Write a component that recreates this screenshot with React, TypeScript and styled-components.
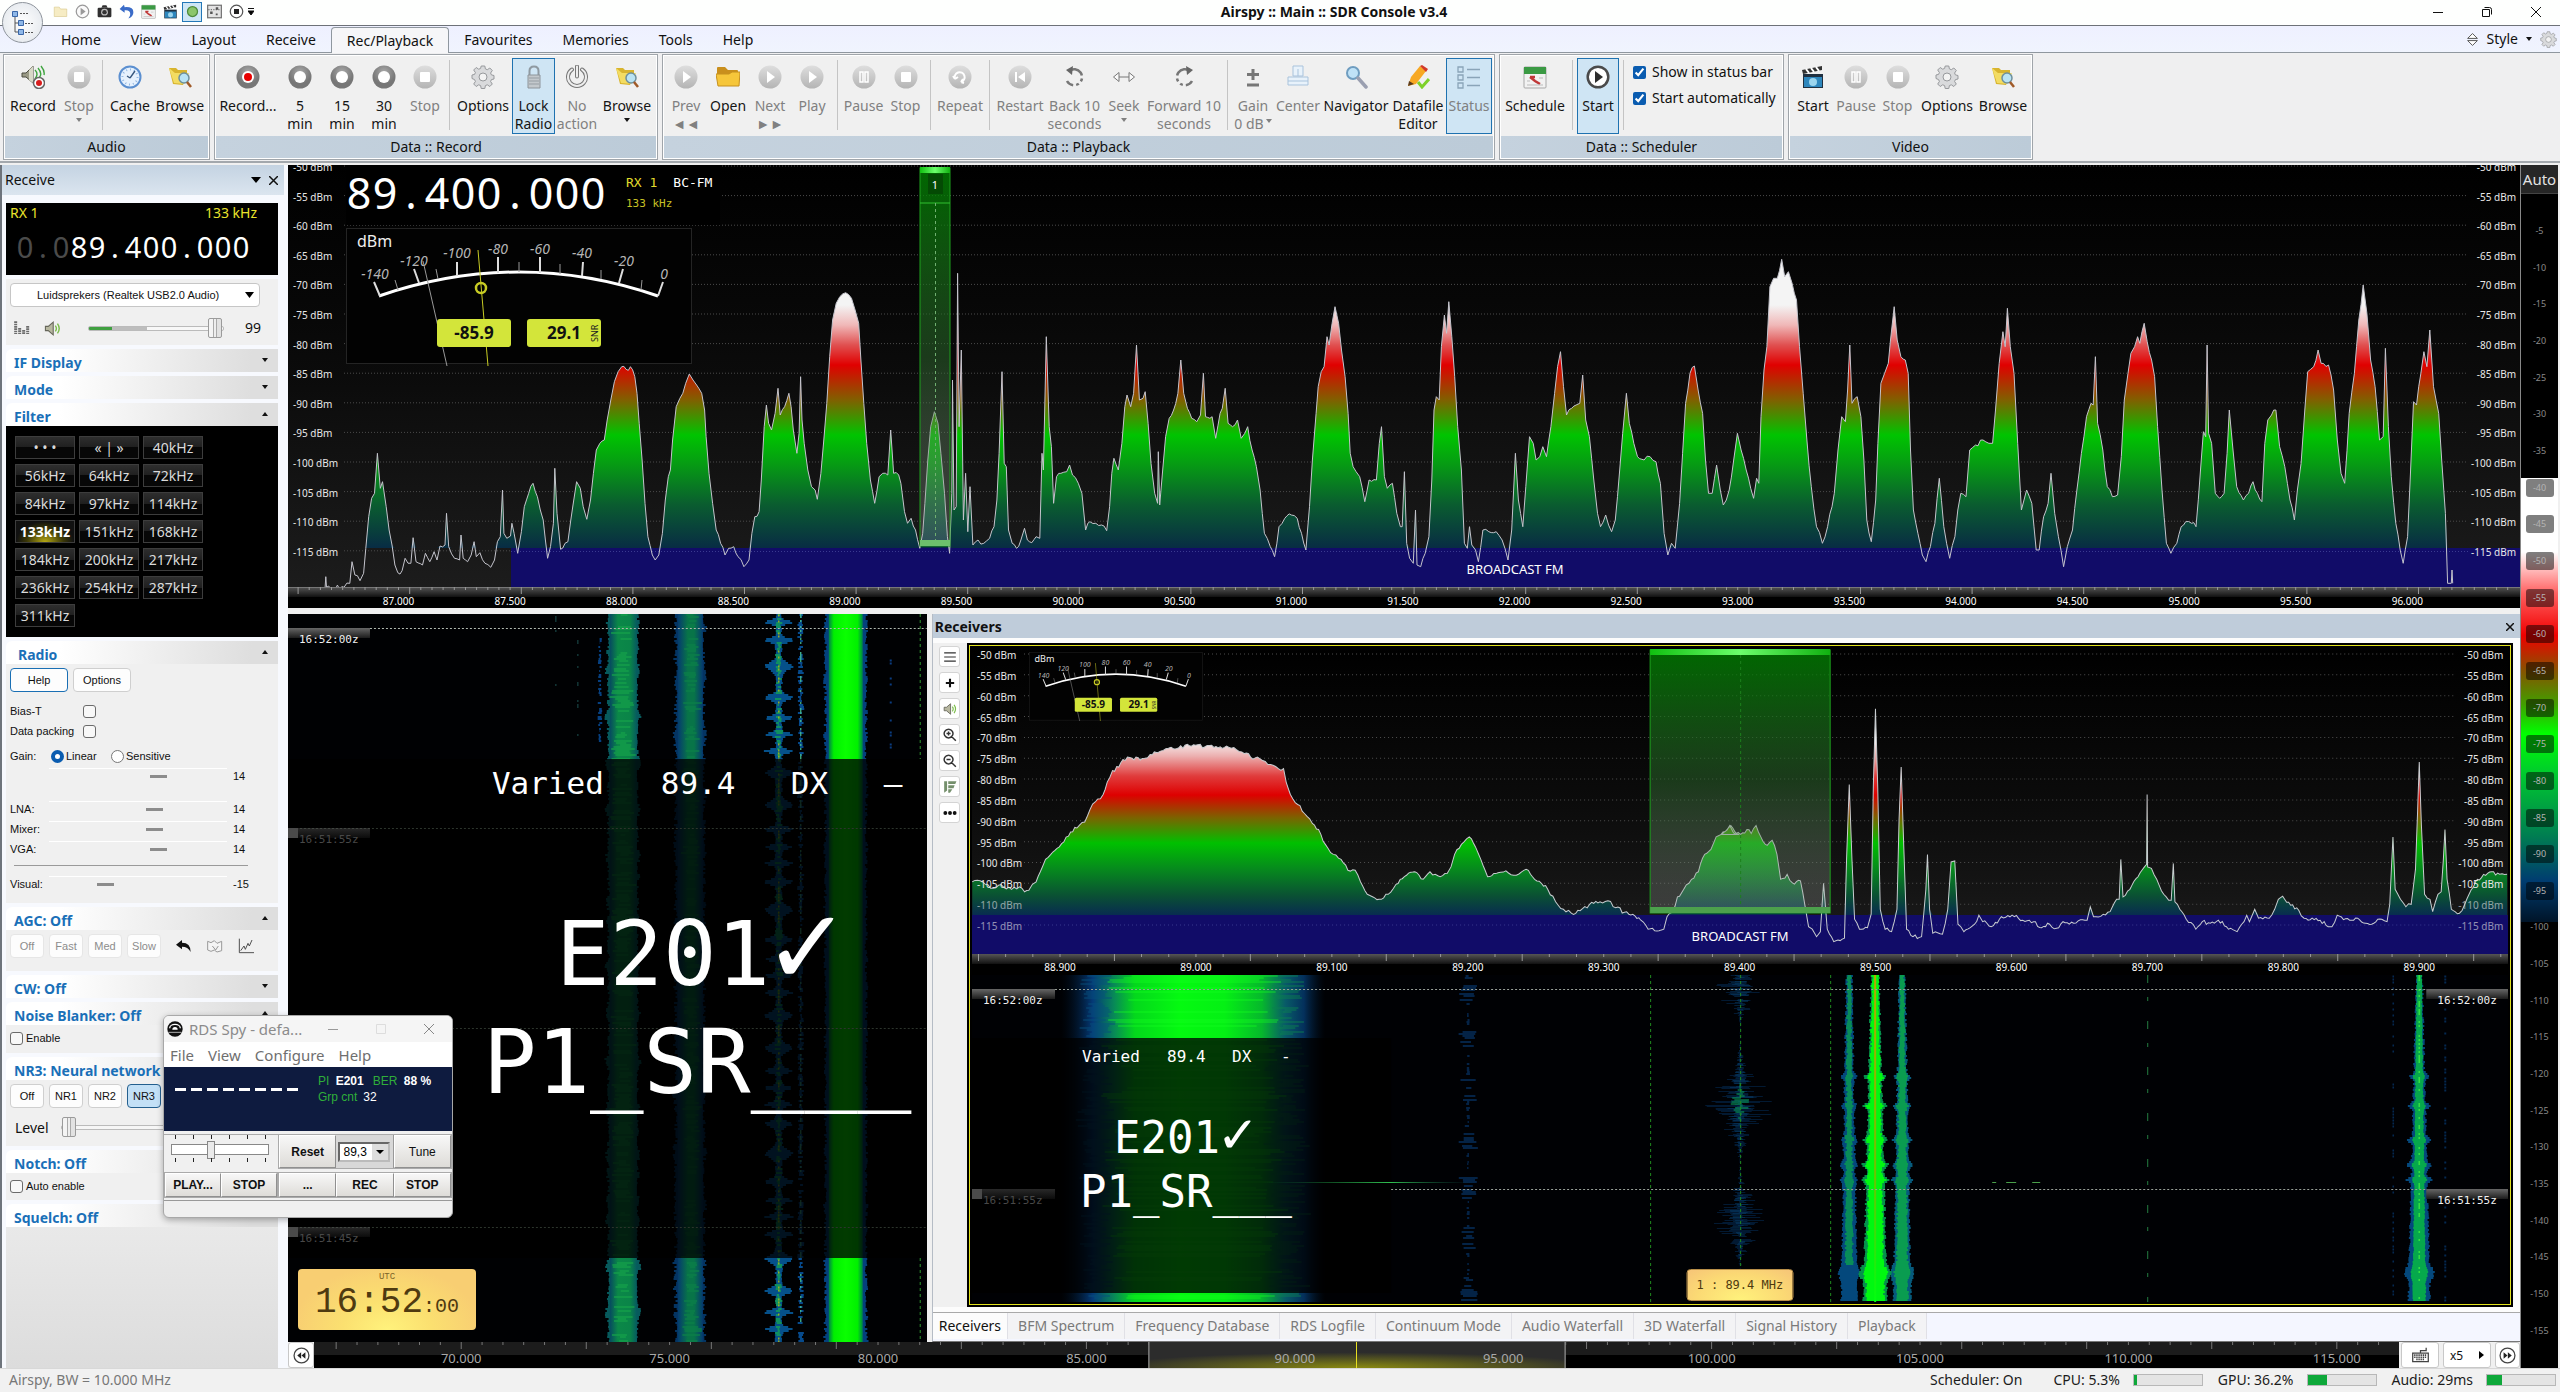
import React from "react";
import styled, { createGlobalStyle, css } from "styled-components";

/* ------------------------------------------------------------------ */
/* Tokens                                                              */
/* ------------------------------------------------------------------ */

const UI = `"Noto Sans", "Open Sans", sans-serif`;
const SMALL = `"Liberation Sans", Arial, sans-serif`;
const MONO = `"DejaVu Sans Mono", "Liberation Mono", monospace`;

const Global = createGlobalStyle`
  *, *::before, *::after { box-sizing: border-box; }
  html, body, #root { height: 100%; }
  body { margin: 0; background: #f0f0f0; font-family: ${UI}; font-size: 14px; color: #111; overflow: hidden; }
  button, select, input { font-family: inherit; }
  button { margin: 0; padding: 0; border: 0; background: none; color: inherit; }
`;

/* ------------------------------------------------------------------ */
/* Helpers for the plots                                               */
/* ------------------------------------------------------------------ */

type Pt = [number, number];

function random(seed: number) {
  let s = seed;
  return () => {
    s = (s * 1664525 + 1013904223) % 4294967296;
    return s / 4294967296;
  };
}

function samples(raw: string, sx: number, ox: number, sy: number, oy: number): Pt[] {
  return raw.trim().split(/\s+/).map((p) => {
    const [x, y] = p.split(",").map(Number);
    return [x / sx + ox, y / sy + oy] as Pt;
  });
}

/* Adds receiver noise between the samples of a trace. */
function roughen(points: Pt[], amp: number, seed: number): Pt[] {
  const rnd = random(seed);
  const out: Pt[] = [];
  points.forEach((p, i) => {
    out.push(p);
    const n = points[i + 1];
    if (!n) return;
    const steps = Math.floor((n[0] - p[0]) / 2);
    for (let k = 1; k < steps; k++) {
      const t = k / steps;
      out.push([p[0] + (n[0] - p[0]) * t, p[1] + (n[1] - p[1]) * t + (rnd() - 0.5) * amp]);
    }
  });
  return out;
}

const toLine = (pts: Pt[]) => pts.map((p, i) => `${i ? "L" : "M"}${p[0].toFixed(1)} ${p[1].toFixed(1)}`).join("");

function toArea(pts: Pt[], floor: number) {
  const c = pts.map((p) => [p[0], Math.min(p[1], floor)] as Pt);
  return `${toLine(c)}L${c[c.length - 1][0]} ${floor}L${c[0][0]} ${floor}Z`;
}

/* Horizontal strokes of varying width: one waterfall line for each step. */
function rows(cx: number, half: (y: number, r: number) => number, y0: number, y1: number, seed: number, step = 2, fill = 1) {
  const rnd = random(seed);
  let d = "";
  for (let y = y0 + step / 2; y < y1; y += step) {
    if (rnd() > fill) continue;
    const l = half(y, rnd());
    const r = half(y, rnd());
    d += `M${(cx - l).toFixed(1)} ${y}H${(cx + r).toFixed(1)}`;
  }
  return d;
}

/* ------------------------------------------------------------------ */
/* Trace data                                                          */
/* ------------------------------------------------------------------ */

const WIDE_LOW = `62,1282 63,1250 64,1282 88,1282 96,1270 99,1205 103,1245 110,1262 115,1240 118,1165 122,1070 126,1015 130,1000 134,880 138,985 141,965 146,1040 150,1110 154,1155 158,1215 162,1238 168,1232 172,1195 180,1210 183,1133 187,1205 196,1215 200,1180 206,1205 212,1175 216,1200 220,1158 227,1155 229,1060 232,1160 240,1195 247,1200 249,1125 252,1195 258,1205 263,1185 267,1145 270,1190 275,1178 282,1210 290,1222 295,1200 299,1145 303,1130 306,990 308,1120 312,1135 317,1128 319,1090 322,1120 327,1180 332,1115 336,1040 342,1000 348,970 354,1010 358,1050 362,1080 365,1140 368,1195 372,1160 376,1090 378,925 381,1060 386,1168 392,1150 396,1145 400,1080 403,1035 408,965 413,985 417,1040 422,1078 427,1020 431,940 435,870 440,850 446,840 450,780 455,720 460,665 465,635 470,620 476,628 482,620 488,650 491,700 494,790 498,900 502,1030 506,1130 512,1185 516,1200 521,1185 526,1120 530,1020 534,950 537,930 540,840 545,740 550,715 554,700 558,670 563,642 568,660 573,675 580,700 584,750 586,830 590,940 595,1030 600,1110 606,1150 612,1185 617,1165 624,1160 630,1190 638,1220 645,1200 649,1120 653,1070 659,1055 662,960 666,800 669,735 672,790 676,810 681,760 685,685 688,765 694,740 700,700 703,740 706,810 711,880 714,820 716,650 718,780 721,850 726,930 731,980 736,990 739,1018 744,940 748,840 752,730 756,590 760,480 765,430 770,410 778,398 786,415 791,450 796,490 799,600 803,730 807,850 812,960 818,1030 824,950 829,940 836,945 840,810 844,940 851,945 854,970 859,1055 863,1090 868,1075 874,1110 880,1165 884,1120 887,1030 891,900 895,800 900,755 905,790 909,880 914,1000 918,1130 921,1180 924,1000 925,660 927,1050 930,1040 932,340 934,800 937,570 940,1080 943,940 946,1115 949,980 953,1155 960,1140 968,1150 976,1135 982,1100 986,1020 989,880 993,635 996,910 999,920 1002,1110 1007,1150 1013,1165 1019,1140 1024,1105 1028,1140 1034,1148 1040,1130 1045,1135 1048,880 1050,930 1054,530 1058,800 1061,860 1064,1030 1068,950 1074,940 1082,935 1086,915 1090,945 1098,970 1103,1000 1108,1110 1114,1085 1122,1090 1130,1095 1137,1112 1141,1040 1144,940 1147,895 1153,930 1158,850 1162,740 1165,705 1170,740 1174,700 1178,555 1182,720 1187,715 1190,695 1194,790 1198,910 1203,1000 1207,1030 1208,875 1210,1035 1214,930 1218,830 1223,775 1229,750 1235,700 1239,600 1243,700 1248,745 1254,775 1261,785 1266,765 1270,640 1273,770 1282,770 1287,835 1293,760 1296,745 1300,685 1304,790 1310,800 1317,780 1322,835 1327,820 1331,800 1337,870 1343,920 1348,990 1354,1120 1362,1160 1368,1190 1374,1100 1382,1075 1391,1065 1399,1075 1405,1120 1411,1170 1416,1040 1420,900 1425,760 1428,680 1432,635 1436,620 1440,530 1443,555 1447,490 1451,440 1456,490 1460,570 1465,650 1469,760 1472,880 1476,920 1480,935 1485,950 1492,1025 1498,960 1508,960 1512,850 1515,800 1519,950 1523,985 1530,970 1536,1060 1541,1100`;
const WIDE_HIGH = `3,1100 6,935 9,1150 13,1195 18,1210 21,1050 23,1215 28,1220 34,1180 39,1130 43,960 46,750 49,710 53,720 56,560 60,465 63,520 66,425 70,530 74,650 78,800 83,930 87,1150 91,1165 94,1100 97,1155 102,1170 106,1205 112,1110 120,1115 130,1115 138,1140 146,1200 151,1110 156,880 160,1020 166,1100 170,980 175,830 180,850 184,900 189,890 193,860 198,890 204,800 209,700 213,620 217,575 221,680 225,765 232,745 238,735 243,730 247,645 251,780 256,830 262,960 267,1060 271,1100 278,1065 286,1115 291,1080 297,930 301,820 306,700 310,790 316,850 321,890 330,900 338,890 346,905 352,970 357,1120 362,1185 367,1150 372,1165 378,1030 382,880 386,730 392,640 398,618 403,690 409,760 413,900 417,1000 422,1000 428,915 433,990 437,1035 445,990 451,900 456,820 461,870 468,930 474,985 478,1015 482,955 485,970 488,770 492,630 496,560 500,380 505,355 510,355 516,298 520,350 525,335 530,370 536,420 540,560 545,700 550,840 556,980 563,1100 571,1150 578,1100 587,1000 592,870 597,770 602,785 605,690 608,555 611,730 618,710 623,770 627,900 631,1080 637,1145 643,1020 646,850 650,670 655,640 660,610 663,540 668,440 672,540 677,590 683,600 687,640 690,870 694,1050 700,1120 706,1185 711,1205 717,1160 723,1090 729,955 735,1100 743,1195 750,1130 754,1050 758,1000 765,1010 770,870 778,855 788,840 796,850 801,850 805,750 810,610 815,515 818,560 821,445 825,560 830,640 835,850 840,1050 847,990 854,1030 860,1170 864,1170 870,1070 876,1030 880,940 885,1060 890,1130 897,1220 902,1160 909,1110 915,990 921,880 928,770 934,730 937,735 940,590 943,790 950,870 956,980 963,1010 970,1005 975,890 979,720 984,640 988,580 993,560 997,530 1000,550 1006,490 1010,545 1016,600 1020,650 1024,800 1030,990 1036,1150 1042,1180 1050,1150 1056,1100 1062,1085 1070,1090 1076,1100 1082,930 1086,815 1089,830 1091,555 1093,820 1097,850 1102,1000 1108,1015 1114,1000 1118,880 1121,750 1126,870 1131,980 1140,1020 1147,1000 1153,965 1159,1000 1165,1025 1169,850 1173,780 1178,765 1184,750 1189,860 1196,920 1203,1020 1209,1080 1213,990 1218,910 1223,750 1227,635 1235,620 1241,570 1245,610 1255,615 1262,690 1267,840 1272,940 1277,970 1283,760 1290,640 1296,480 1302,375 1307,460 1312,600 1318,680 1324,840 1329,830 1332,565 1336,800 1340,950 1346,1090 1352,1170 1356,1210 1362,1130 1366,930 1370,725 1374,735 1380,640 1384,575 1388,620 1392,510 1397,680 1404,760 1408,900 1413,1060 1416,1270 1421,1270 1422,1230 1423,1270`;
const ZOOM_LOW = `100,545 115,543 125,550 135,558 150,552 160,556 175,560 190,555 200,565 208,562 215,550 222,545 230,525 240,500 250,490 262,478 275,465 288,445 300,437 315,425 325,400 335,385 350,370 358,345 368,322 380,315 388,300 405,297 425,298 440,290 460,283 475,277 490,278 515,272 531,270 545,274 570,276 590,275 605,280 620,288 640,297 655,302 670,310 685,318 695,318 700,345 708,370 722,390 735,408 750,428 762,440 775,470 790,490 805,500 818,522 832,522 842,545 855,570 865,575 882,580 895,570 910,550 930,532 950,527 962,540 975,525 990,533 1008,528 1015,515 1022,490 1035,470 1050,455 1062,475 1072,500 1085,535 1105,527 1120,523 1135,532 1150,525 1163,522 1175,540 1188,548 1200,560 1215,585 1230,600 1245,608 1262,603 1280,590 1300,585 1315,583 1330,597 1355,610 1378,622 1392,640 1413,643 1422,640 1428,615 1440,605 1448,575 1460,560 1475,540 1488,525 1500,490 1512,480 1522,455 1535,445 1550,432 1558,445 1566,450`;
const ZOOM_HIGH = `3,450 8,445 18,432 25,447 38,450 50,440 58,448 67,432 76,455 88,472 97,462 106,490 113,540 125,530 135,547 150,543 158,590 165,635 172,640 180,655 187,645 193,548 200,640 212,665 232,658 236,500 241,350 246,500 251,620 260,640 275,637 282,610 286,350 290,198 294,350 299,600 308,640 320,645 330,600 334,420 338,315 343,480 348,640 360,655 376,655 384,560 387,490 391,600 397,648 415,650 425,600 431,505 438,503 444,630 455,645 475,630 483,612 490,625 510,633 525,615 545,612 565,622 585,625 600,637 615,630 628,638 640,625 660,628 685,622 691,595 697,615 715,610 728,605 740,580 745,580 748,500 752,575 765,560 780,535 792,515 796,510 797,370 798,515 805,518 815,540 828,570 842,582 846,508 849,585 858,600 870,620 888,640 900,625 915,628 930,622 945,635 965,645 978,625 983,612 988,625 998,600 1005,618 1025,618 1035,600 1042,580 1050,574 1065,592 1080,602 1090,618 1105,618 1120,622 1135,635 1142,635 1152,612 1175,622 1190,618 1205,628 1220,628 1235,620 1245,625 1250,590 1253,520 1256,455 1260,560 1270,580 1280,595 1290,590 1298,520 1302,400 1305,305 1309,430 1315,570 1325,580 1330,605 1340,570 1346,565 1350,500 1353,440 1357,540 1365,600 1380,608 1390,590 1398,570 1410,545 1425,530 1440,525 1455,530 1469,530`;

const wideTrace = roughen([...samples(WIDE_LOW, 1.3754, -8, 3, -5), ...samples(WIDE_HIGH, 1.3517, 1112, 3, -5)], 5, 7);
const zoomTrace = roughen([...samples(ZOOM_LOW, 1.912, -52, 2.005, -38), ...samples(ZOOM_HIGH, 1.867, 748, 2.005, -38)], 4, 11);

const LEVELS = [-50, -55, -60, -65, -70, -75, -80, -85, -90, -95, -100, -105, -110, -115];

/* ------------------------------------------------------------------ */
/* Icons                                                               */
/* ------------------------------------------------------------------ */

const Disc = ({ children, light }: { children?: React.ReactNode; light?: boolean }) => (
  <g>
    <circle cx="12" cy="12" r="11.5" fill={light ? "url(#discLight)" : "url(#discDark)"} />
    {children}
  </g>
);

const GEAR = "M10.2 1h3.6l.6 2.9 1.9.8 2.5-1.7 2.5 2.5-1.7 2.5.8 1.9 2.6.6v3.5l-2.6.6-.8 1.9 1.7 2.5-2.5 2.5-2.5-1.7-1.9.8-.6 2.9h-3.6l-.6-2.9-1.9-.8-2.5 1.7-2.5-2.5 1.7-2.5-.8-1.9L1 13.5V10l2.6-.6.8-1.9L2.700 5l2.500-2.500 2.500 1.700 1.900-.8z";

const drawings: Record<string, React.ReactNode> = {
  speakerRec: (
    <g>
      <path d="M1 8h4l7-7v17l-7-6H1z" fill="#9a9a86" stroke="#4c4c40" />
      <path d="M8 5l4-4v17l-4-3z" fill="#d9d9c8" />
      <path d="M14 5q4 4 0 9M17 3q5 6 1 10M20 1q4 5 3 9" fill="none" stroke="#3fa43f" strokeWidth="1.4" />
      <circle cx="18" cy="18" r="5.500" fill="#fff" stroke="#666" strokeWidth="1.500" />
      <circle cx="18" cy="18" r="3" fill="#d81c1c" />
    </g>
  ),
  stop: <Disc light><rect x="7" y="7" width="10" height="10" rx="1" fill="#fff" /></Disc>,
  play: <Disc light><path d="M9 6l8 6-8 6z" fill="#fff" /></Disc>,
  pause: <Disc light><path d="M8 7h3v10H8zM13 7h3v10h-3z" fill="none" stroke="#fff" strokeWidth="1.500" /></Disc>,
  repeat: <Disc light><path d="M7 14a5 5 0 1 1 6 3M7 14l-2-3M7 14l3-2M13 17l2-3M13 17l3 1" fill="none" stroke="#fff" strokeWidth="2" /></Disc>,
  restart: <Disc light><path d="M7 7h2v10H7zM17 7v10l-7-5z" fill="#fff" /></Disc>,
  rec: <Disc><circle cx="12" cy="12" r="6" fill="#fff" /><circle cx="12" cy="12" r="4" fill="#e80000" /></Disc>,
  ring: <Disc><circle cx="12" cy="12" r="6" fill="#fff" /></Disc>,
  clock: (
    <g>
      <circle cx="12" cy="12" r="10.500" fill="#e6f1fd" stroke="#5b8fd0" strokeWidth="2" />
      <circle cx="12" cy="12" r="7.500" fill="none" stroke="#8fb4e0" strokeDasharray="1 2.900" strokeWidth="2" />
      <path d="M12 13l5-7M12 13l-3-2" stroke="#35557c" strokeWidth="1.300" />
    </g>
  ),
  folderSearch: (
    <g>
      <path d="M1 3h7l2 2h9v6l-4 9-10-1z" fill="#d8b42e" />
      <path d="M1 3l6 5h14l-5 11-10-1z" fill="#f3dc62" />
      <circle cx="16" cy="13" r="5" fill="#b9e3f4" stroke="#6e8f9c" strokeWidth="1.500" />
      <path d="M19 17l4 5" stroke="#a05a28" strokeWidth="2.500" />
    </g>
  ),
  gear: (
    <g fill="#d9dadc" stroke="#97999c">
      <path d={GEAR} />
      <circle cx="12" cy="12" r="4" fill="#f3f3f3" />
    </g>
  ),
  lock: (
    <g>
      <path d="M7.500 12V6q0-4.500 4.500-4.500t4.500 4.500v6" fill="none" stroke="#8f9aa2" strokeWidth="2" />
      <path d="M6 10h12v13H6z" fill="#c3c8cc" stroke="#8d949a" />
      <path d="M7 13h10M7 16h10M7 19h10" stroke="#969da3" />
    </g>
  ),
  power: (
    <g fill="none" strokeLinecap="round">
      <path d="M7 4.500a9 9 0 1 0 10 0M12 1.500v10" stroke="#777" strokeWidth="4" />
      <path d="M7 4.500a9 9 0 1 0 10 0M12 1.500v10" stroke="#eee" strokeWidth="2" />
    </g>
  ),
  folder: (
    <g>
      <path d="M1 3q0-1 1-1h7l3 3h9q1 0 1 1v4H1z" fill="#c98f1c" />
      <path d="M0 9h13l3-2h8l-1 14H2z" fill="#f6c63a" stroke="#c6901e" />
    </g>
  ),
  back: (
    <g fill="none" stroke="#777" strokeWidth="2.500">
      <path d="M6 6a8 8 0 1 1-2 10" strokeDasharray="16 3 3 3 3 3" />
      <path d="M10 1L3 5l6 5z" fill="#666" stroke="none" />
    </g>
  ),
  forward: (
    <g fill="none" stroke="#777" strokeWidth="2.500">
      <path d="M18 6a8 8 0 1 0 2 10" strokeDasharray="16 3 3 3 3 3" />
      <path d="M14 1l7 4-6 5z" fill="#666" stroke="none" />
    </g>
  ),
  seek: <path d="M7 12h10M7 7.500L1.500 12 7 16.500zM17 7.500l5.500 4.500-5.500 4.500z" fill="#fafafa" stroke="#777" />,
  gain: <path d="M12 4v11M6 9.500h12M6 20h12" stroke="#777" strokeWidth="3" />,
  center: (
    <g fill="#e8f2fb" stroke="#a9c3dc">
      <path d="M7 1h10v10H7zM2 12h20v8H2z" />
      <path d="M2 16h20M12 4v7" />
    </g>
  ),
  magnifier: (
    <g>
      <circle cx="9" cy="8" r="6" fill="#bfe2f7" stroke="#6f9dc0" strokeWidth="2" />
      <path d="M14 13l8 9" stroke="#9a9fb0" strokeWidth="3.500" strokeLinecap="round" />
    </g>
  ),
  pencil: (
    <g>
      <path d="M2 21L5 12 14 1l6 5-10 13z" fill="#f7a823" />
      <path d="M14 1l2-1 6 4-2 3z" fill="#d23a2a" />
      <path d="M2 21l1-5 5 3z" fill="#5a3b1e" />
      <path d="M12 17l4 5 7-8" fill="none" stroke="#7ed12a" strokeWidth="3" />
    </g>
  ),
  list: (
    <g fill="none" stroke="#8aa4b8" strokeWidth="1.300">
      <path d="M1 2h5v5H1zM1 10h5v5H1zM1 18h5v5H1zM10 4.500h13M10 12.500h13M10 20.500h13" />
    </g>
  ),
  calendar: (
    <g>
      <rect x="1" y="2" width="22" height="21" rx="1" fill="#f2f2f2" stroke="#a8a8a8" />
      <rect x="1" y="2" width="22" height="7" fill="#3b9a44" />
      <path d="M7 12l5 4 5 3M7 12h5" fill="none" stroke="#c03838" strokeWidth="2.500" />
      <path d="M4 20h16M4 16h3M16 13h4" stroke="#bbb" />
    </g>
  ),
  startCircle: (
    <g>
      <circle cx="12" cy="12" r="10.300" fill="#fff" stroke="#4a4a4a" strokeWidth="2.500" />
      <path d="M9 6l8 6-8 6z" fill="#2d2d2d" />
    </g>
  ),
  clapper: (
    <g>
      <path d="M2 9h20v14H2z" fill="#203040" />
      <path d="M3 12h18v10H3z" fill="#2e87bd" />
      <circle cx="12" cy="17" r="4" fill="#9bd5ee" />
      <path d="M1 5l20-4v4L2 9z" fill="#333" />
      <path d="M5 4l3 4M10 3l3 4M15 2l3 4" stroke="#fff" strokeWidth="2" />
    </g>
  ),
  camera: (
    <g>
      <rect x="1" y="6" width="22" height="15" rx="2" fill="#2f2f2f" />
      <path d="M7 6l2-4h6l2 4z" fill="#2f2f2f" />
      <circle cx="12" cy="13" r="5.500" fill="#bbb" />
      <circle cx="12" cy="13" r="3.500" fill="#333" />
    </g>
  ),
  undo: <path d="M8 1L1 8l8 6v-4q9-1 9 6 0 4-3 7 8-3 8-10Q23 4 9 5z" fill="#3a6cc8" />,
  paleFolder: <path d="M2 5h8l2 3h10v12H2z" fill="#f6ecc4" stroke="#d9c88c" />,
  palePlay: (
    <g>
      <circle cx="12" cy="12" r="10" fill="#fafafa" stroke="#999" strokeWidth="2" />
      <path d="M9 6l8 6-8 6z" fill="#999" />
    </g>
  ),
  greenDot: <circle cx="12" cy="12" r="8" fill="#8cc66a" stroke="#4f8a3c" strokeWidth="2" />,
  mixer: (
    <g>
      <rect x="1" y="2" width="22" height="20" fill="#e3e3e3" stroke="#777" strokeWidth="2" />
      <path d="M2 9h20" stroke="#777" strokeWidth="2" strokeDasharray="2 2" />
      <path d="M5 12h4v4H5zM14 5h4v4h-4zM14 15h3v3h-3z" fill="#555" />
    </g>
  ),
  stopCircle: (
    <g>
      <circle cx="12" cy="12" r="10" fill="#fff" stroke="#555" strokeWidth="2" />
      <rect x="8" y="8" width="8" height="8" fill="#222" />
    </g>
  ),
  bars: <path d="M2.500 2v19M8.500 12v9M14.500 15v6M20.500 9v12" stroke="#6c6c6c" strokeWidth="4.500" strokeDasharray="2.500 1" />,
  speaker: (
    <g>
      <path d="M2 9h4l7-6v18l-7-6H2z" fill="#b8b8a0" stroke="#66665a" strokeWidth="1.500" />
      <path d="M16 8q3 4 0 8M19 5q5 7 0 14" fill="none" stroke="#7bbd4a" strokeWidth="2" />
    </g>
  ),
  reply: <path d="M9 3L0 10l9 7v-4q9 0 13 8 0-14-13-14z" fill="#111" />,
  map: <path d="M1 5l5 2 5-3 4 4 7-3v14l-7 2-4-3-5 2-5-2zM8 12l5 6 4-6" fill="#f5f5f5" stroke="#999" strokeWidth="1.500" />,
  graph: <path d="M2 1v21h22M4 19l5-7 2 5 4-9 2 4 4-9" fill="none" stroke="#444" strokeWidth="1.400" />,
  menu: <path d="M2 5h20M2 12h20M2 19h20" stroke="#333" strokeWidth="2" />,
  plus: <path d="M12 2v20M2 12h20" stroke="#111" strokeWidth="5" />,
  zoomIn: <path d="M9.500 2a7.500 7.500 0 1 0 .1 0M15 15l7 7M9.500 6v7M6 9.500h7" fill="none" stroke="#333" strokeWidth="2.500" />,
  zoomOut: <path d="M9.500 2a7.500 7.500 0 1 0 .1 0M15 15l7 7M6 9.500h7" fill="none" stroke="#333" strokeWidth="2.500" />,
  levels: <path d="M2 2h5v16l-5 4zM9 2h14l-2 5H9zM9 9h11l-2 5H9zM9 16h7l-4 6H9z" fill="#75906c" />,
  dots: <g fill="#111"><circle cx="4" cy="12" r="3.300" /><circle cx="12" cy="12" r="3.300" /><circle cx="20" cy="12" r="3.300" /></g>,
  rewind: <g><circle cx="12" cy="12" r="10.500" fill="#fff" stroke="#444" strokeWidth="1.800" /><path d="M11.500 7.500v9L6 12zM17.500 7.500v9L12 12z" fill="#222" /></g>,
  fastForward: <g><circle cx="12" cy="12" r="10.500" fill="#fff" stroke="#444" strokeWidth="1.800" /><path d="M6.500 7.500v9L12 12zM12.500 7.500v9L18 12z" fill="#222" /></g>,
  keyboard: <g fill="none" stroke="#444"><path d="M1 8.500h22v12H1zM12 8V5h8V1" strokeWidth="1.800" /><path d="M3 11.500h18M3 14.500h18M6 17.500h12" strokeWidth="2.200" strokeDasharray="2 1" /></g>,
  rds: <g><circle cx="12" cy="12" r="11.500" fill="#111" /><path d="M4 11a8 6 0 0 1 16 0" fill="none" stroke="#fff" strokeWidth="2" /><path d="M8 13a4 4 0 0 1 8 0z" fill="#fff" /><path d="M2 17h20" stroke="#fff" /></g>,
  styleMark: <g fill="#fff" stroke="#555" strokeWidth="1.800"><path d="M3 10L12 1l9 9zM3 14l9 9 9-9z" /></g>,
};

function Icon({ name, size = 24 }: { name: string; size?: number }) {
  return (
    <svg width={size} height={size} viewBox="0 0 24 24" aria-hidden="true">
      {drawings[name]}
    </svg>
  );
}

const Caret = ({ up }: { up?: boolean }) => (
  <svg width="6" height="4" viewBox="0 0 6 4" aria-hidden="true">
    <path d={up ? "M0 4L3 0 6 4z" : "M0 0h6L3 4z"} fill="currentColor" />
  </svg>
);

/* ------------------------------------------------------------------ */
/* Window shell                                                        */
/* ------------------------------------------------------------------ */

const Shell = styled.div`
  position: relative;
  display: grid;
  grid-template-rows: 26px 27px 110px minmax(0, 1fr) 24px;
  height: 100vh;
  background: #f0f0f0;
`;

const TitleBar = styled.header`
  display: flex;
  align-items: center;
  padding-bottom: 2px;
  background: #fefffe;
  border-bottom: 1px solid #6d7178;
`;

const QuickAccess = styled.div`
  display: flex;
  align-items: center;
  gap: 2px;
  padding-left: 50px;
  color: #111;
`;

const QuickButton = styled.button<{ $on?: boolean }>`
  display: grid;
  place-items: center;
  width: 20px;
  height: 20px;
  border: 1px solid ${(p) => (p.$on ? "#2478b8" : "transparent")};
  background: ${(p) => (p.$on ? "#cfe6f5" : "transparent")};
`;

const WindowTitle = styled.h1`
  flex: 1;
  margin: 0;
  text-align: center;
  font-size: 14px;
  line-height: 20px;
`;

const WindowButtons = styled.div`
  display: flex;
  width: 146px;
`;

const WindowButton = styled.button`
  flex: 1;
  height: 22px;
`;

const Orb = styled.button`
  position: absolute;
  left: 2px;
  top: 2px;
  width: 41px;
  height: 41px;
  display: grid;
  place-items: center;
  border: 1px solid #8e949c;
  border-radius: 50%;
  background: radial-gradient(#fff, #dfe4ea);
`;

const TabBar = styled.nav`
  display: flex;
  align-items: flex-end;
  padding: 0 3px 0 46px;
  background: linear-gradient(#eef0ff, #f0f4fe);
  border-bottom: 1px solid #8f979f;
`;

const MenuTab = styled.button<{ $active?: boolean }>`
  height: 25px;
  padding: 0 15px;
  font-size: 14px;
  line-height: 22px;
  ${(p) =>
    p.$active &&
    css`
      margin-bottom: -1px;
      height: 26px;
      border: 1px solid #8f979f;
      border-bottom: 0;
      border-radius: 4px 4px 0 0;
      background: #f6f6f8;
    `}
`;

const StyleMenu = styled.div`
  display: flex;
  align-items: center;
  gap: 8px;
  height: 26px;
  margin-left: auto;
  line-height: 20px;
`;

/* ------------------------------------------------------------------ */
/* Ribbon                                                              */
/* ------------------------------------------------------------------ */

const RibbonBar = styled.section`
  display: flex;
  gap: 4px;
  padding: 1px 0 1px 3px;
  background: #efeff0;
  border-bottom: 2px solid #a3a8ad;
`;

const Group = styled.div`
  display: flex;
  flex-direction: column;
  height: 106px;
  border: 1px solid #a0a5aa;
  box-shadow: inset 0 0 0 1px #fff;
  background: #f0f0f0;
  padding: 3px 1px 1px;
`;

const GroupBody = styled.div`
  flex: 1;
  display: flex;
  align-items: flex-start;
  padding: 0 1px;
`;

const GroupLabel = styled.div`
  height: 22px;
  line-height: 22px;
  text-align: center;
  background: linear-gradient(90deg, #c5d2de, #bccbd8);
`;

const Divider = styled.i`
  width: 1px;
  height: 70px;
  margin: 2px 4px;
  background: #c4c4c4;
`;

const Tool = styled.button<{ $w: number; $off?: boolean; $on?: boolean }>`
  display: flex;
  flex-direction: column;
  align-items: center;
  width: ${(p) => p.$w}px;
  height: 76px;
  padding-top: 6px;
  white-space: nowrap;
  font-size: 14px;
  line-height: 18px;
  color: ${(p) => (p.$off ? "#808080" : "#151515")};
  border: 1px solid ${(p) => (p.$on ? "#1f72b0" : "transparent")};
  background: ${(p) => (p.$on ? "#cfe5f4" : "transparent")};
  svg { flex: none; }
  > span:first-of-type { margin-top: 8px; }
`;

const CaretLine = styled.span`
  height: 10px;
  display: flex;
  align-items: center;
`;

const SubCaret = styled.span`
  display: flex;
  gap: 2px;
  svg { margin-top: 4px; }
`;

type ToolSpec = { icon: string; text: string; w: number; sub?: string; caret?: boolean; off?: boolean; on?: boolean } | "|";

const audioTools: ToolSpec[] = [
  { icon: "speakerRec", text: "Record", w: 54 },
  { icon: "stop", text: "Stop", w: 38, caret: true, off: true },
  "|",
  { icon: "clock", text: "Cache", w: 46, caret: true },
  { icon: "folderSearch", text: "Browse", w: 54, caret: true },
];
const recordTools: ToolSpec[] = [
  { icon: "rec", text: "Record...", w: 62 },
  { icon: "ring", text: "5", sub: "min", w: 42 },
  { icon: "ring", text: "15", sub: "min", w: 42 },
  { icon: "ring", text: "30", sub: "min", w: 42 },
  { icon: "stop", text: "Stop", w: 40, off: true },
  "|",
  { icon: "gear", text: "Options", w: 58 },
  { icon: "lock", text: "Lock", sub: "Radio", w: 43, on: true },
  { icon: "power", text: "No", sub: "action", w: 44, off: true },
  { icon: "folderSearch", text: "Browse", w: 56, caret: true },
];
const playTools: ToolSpec[] = [
  { icon: "play", text: "Prev", sub: "◄◄", w: 42, off: true },
  { icon: "folder", text: "Open", w: 42 },
  { icon: "play", text: "Next", sub: "►►", w: 42, off: true },
  { icon: "play", text: "Play", w: 42, off: true },
  "|",
  { icon: "pause", text: "Pause", w: 43, off: true },
  { icon: "stop", text: "Stop", w: 41, off: true },
  "|",
  { icon: "repeat", text: "Repeat", w: 50, off: true },
  "|",
  { icon: "restart", text: "Restart", w: 52, off: true },
  { icon: "back", text: "Back 10", sub: "seconds", w: 57, off: true },
  { icon: "seek", text: "Seek", w: 42, caret: true, off: true },
  { icon: "forward", text: "Forward 10", sub: "seconds", w: 78, off: true },
  "|",
  { icon: "gain", text: "Gain", sub: "0 dB", caret: true, w: 42, off: true },
  { icon: "center", text: "Center", w: 48, off: true },
  { icon: "magnifier", text: "Navigator", w: 68 },
  { icon: "pencil", text: "Datafile", sub: "Editor", w: 56 },
  { icon: "list", text: "Status", w: 46, off: true, on: true },
];
const scheduleTools: ToolSpec[] = [
  { icon: "calendar", text: "Schedule", w: 66 },
  "|",
  { icon: "startCircle", text: "Start", w: 42, on: true },
  "|",
];
const videoTools: ToolSpec[] = [
  { icon: "clapper", text: "Start", w: 44 },
  { icon: "pause", text: "Pause", w: 42, off: true },
  { icon: "stop", text: "Stop", w: 41, off: true },
  { icon: "gear", text: "Options", w: 58 },
  { icon: "folderSearch", text: "Browse", w: 54 },
];

const Checks = styled.div`
  display: flex;
  flex-direction: column;
  gap: 6px;
  padding: 4px 0 0 5px;
  width: 153px;
  label { display: flex; align-items: center; gap: 6px; line-height: 20px; white-space: nowrap; }
  input { margin: 0; width: 13px; height: 13px; accent-color: #0a5cb0; }
`;

function Tools({ items }: { items: ToolSpec[] }) {
  return (
    <>
      {items.map((t, i) =>
        t === "|" ? (
          <Divider key={i} />
        ) : (
          <Tool key={i} $w={t.w} $off={t.off} $on={t.on}>
            <Icon name={t.icon} />
            <span>{t.text}</span>
            {t.sub && !t.caret && <span>{t.sub}</span>}
            {t.sub && t.caret && <SubCaret>{t.sub}<Caret /></SubCaret>}
            {!t.sub && t.caret && <CaretLine><Caret /></CaretLine>}
          </Tool>
        )
      )}
    </>
  );
}

function Ribbon() {
  return (
    <RibbonBar>
      <Group><GroupBody><Tools items={audioTools} /></GroupBody><GroupLabel>Audio</GroupLabel></Group>
      <Group><GroupBody><Tools items={recordTools} /></GroupBody><GroupLabel>Data :: Record</GroupLabel></Group>
      <Group><GroupBody><Tools items={playTools} /></GroupBody><GroupLabel>Data :: Playback</GroupLabel></Group>
      <Group>
        <GroupBody>
          <Tools items={scheduleTools} />
          <Checks>
            <label><input type="checkbox" defaultChecked />Show in status bar</label>
            <label><input type="checkbox" defaultChecked />Start automatically</label>
          </Checks>
        </GroupBody>
        <GroupLabel>Data :: Scheduler</GroupLabel>
      </Group>
      <Group><GroupBody><Tools items={videoTools} /></GroupBody><GroupLabel>Video</GroupLabel></Group>
    </RibbonBar>
  );
}

/* ------------------------------------------------------------------ */
/* Receive panel                                                       */
/* ------------------------------------------------------------------ */

const Workspace = styled.main`
  display: grid;
  grid-template-columns: 288px minmax(0, 1fr) 40px;
  padding-top: 2px;
  min-height: 0;
`;

const Side = styled.aside`
  display: flex;
  flex-direction: column;
  gap: 4px;
  min-height: 0;
  padding-right: 10px;
  border-left: 2px solid #6e747c;
  background: #f7f9fe;
  overflow: hidden;
  > * { margin-left: 4px; flex: none; }
`;

const SideTitle = styled.div`
  display: flex;
  align-items: center;
  justify-content: space-between;
  height: 30px;
  margin: 0 -6px 4px 0;
  padding: 0 6px 0 3px;
  line-height: 20px;
  background: linear-gradient(#c4d3e2, #dbe5ef);
  ${Side} > & { margin-left: 0; }
  div { display: flex; align-items: center; gap: 8px; }
`;

const Display = styled.div`
  height: 72px;
  padding: 0 21px 0 4px;
  background: #000;
  color: #e9e32c;
`;

const DisplayTop = styled.div`
  display: flex;
  justify-content: space-between;
  height: 26px;
  line-height: 20px;
`;

const Cells = styled.div<{ $size: number; $pitch: number }>`
  display: flex;
  color: #fff;
  font-size: ${(p) => p.$size}px;
  line-height: ${(p) => p.$size + 6}px;
  span { width: ${(p) => p.$pitch}px; text-align: center; }
  span[data-dim] { color: #4b4b4b; }
  ${Display} & { padding-left: 6px; }
`;

function Digits({ value, dim = 0, size, pitch }: { value: string; dim?: number; size: number; pitch: number }) {
  return (
    <Cells $size={size} $pitch={pitch}>
      {value.split("").map((c, i) => <span key={i} data-dim={i < dim ? "" : undefined}>{c}</span>)}
    </Cells>
  );
}

const VolumeBox = styled.div`
  height: 66px;
  padding: 4px 4px 0;
  background: #f0f0f0;
`;

const DeviceSelect = styled.select`
  display: block;
  width: 250px;
  height: 24px;
  padding: 0 22px 0 26px;
  border: 1px solid #c6c6c6;
  border-radius: 4px;
  appearance: none;
  background: #fff url("data:image/svg+xml,%3Csvg xmlns='http://www.w3.org/2000/svg' width='9' height='6'%3E%3Cpath d='M0 0h9L4.500 6z'/%3E%3C/svg%3E") no-repeat right 5px center;
  font: 11px ${SMALL};
  color: #111;
`;

const VolumeRow = styled.div`
  display: flex;
  align-items: center;
  height: 42px;
  padding-left: 4px;
  svg + svg { margin: 0 27px 0 14px; }
  output { margin-left: 21px; line-height: 20px; }
`;

const Fader = styled.input<{ $w: number; $lead?: string }>`
  appearance: none;
  width: ${(p) => p.$w}px;
  height: 20px;
  margin: 0;
  background: none;
  &::-webkit-slider-runnable-track {
    height: 5px;
    border: 1px solid #bbb;
    border-radius: 2px;
    background: ${(p) => p.$lead || "#f6f6f6"};
  }
  &::-webkit-slider-thumb {
    appearance: none;
    width: 14px;
    height: 20px;
    margin-top: -9px;
    border: 1px solid #9b9b9b;
    border-radius: 2px;
    background: linear-gradient(90deg, #f4f4f4 4px, #aaa 4px, #aaa 5px, #eee 5px, #eee 7px, #aaa 7px, #aaa 8px, #e2e2e2 8px);
  }
`;

const Head = styled.button<{ $indent?: boolean }>`
  display: flex;
  align-items: center;
  justify-content: space-between;
  height: 23px;
  padding: 4px 10px 0 ${(p) => (p.$indent ? 12 : 8)}px;
  border-radius: 6px 0 0 0;
  background: linear-gradient(95deg, #fff 20%, #dedede 90%);
  font-weight: 700;
  font-size: 14px;
  line-height: 19px;
  color: #1a70b8;
  white-space: nowrap;
  svg { color: #111; margin-bottom: 6px; }
`;

const Section = styled.section`
  display: flex;
  flex-direction: column;
`;

const Body = styled.div<{ $h: number }>`
  height: ${(p) => p.$h}px;
  padding: 0 4px;
  background: #f0f0f0;
  font: 11px ${SMALL};
`;

const FilterPad = styled.div`
  display: grid;
  grid-template-columns: repeat(3, 60px);
  grid-auto-rows: 23px;
  gap: 5px 4px;
  padding: 10px 9px;
  background: #000;
`;

const FilterKey = styled.button<{ $on?: boolean }>`
  border: 1px solid #3d3d3d;
  background: ${(p) =>
    p.$on
      ? "radial-gradient(ellipse at 50% 100%, #b5a814 0%, #3a3708 45%, transparent 70%), #111"
      : "linear-gradient(#2e2e2e, #1f1f1f 50%, #070707 50%)"};
  color: ${(p) => (p.$on ? "#fff" : "#dadada")};
  font-size: 14px;
  font-weight: ${(p) => (p.$on ? 700 : 400)};
  line-height: 19px;
  white-space: nowrap;
`;

const filters = ["• • •", "« | »", "40kHz", "56kHz", "64kHz", "72kHz", "84kHz", "97kHz", "114kHz", "133kHz", "151kHz", "168kHz", "184kHz", "200kHz", "217kHz", "236kHz", "254kHz", "287kHz", "311kHz"];

const PushRow = styled.div`
  display: flex;
  align-items: center;
  gap: 5px;
  padding-top: 4px;
  svg { margin-left: 10px; }
`;

const Push = styled.button<{ $w: number; $kind?: "focus" | "on" | "off" }>`
  width: ${(p) => p.$w}px;
  height: 24px;
  border: 1px solid ${(p) => (p.$kind === "focus" ? "#1a6fb4" : p.$kind === "on" ? "#245f8e" : p.$kind === "off" ? "#e6e6e6" : "#cfcfcf")};
  border-radius: 4px;
  background: ${(p) => (p.$kind === "on" ? "#c3e0f6" : "#fdfdfd")};
  color: ${(p) => (p.$kind === "off" ? "#8c8c8c" : "#111")};
  font-size: 11px;
`;

const Field = styled.div<{ $label: number; $below?: number }>`
  display: flex;
  align-items: center;
  height: 20px;
  margin-bottom: ${(p) => p.$below || 0}px;
  > label:first-child, > span:first-child { width: ${(p) => p.$label}px; }
  output { margin-left: 6px; }
`;

const Tick = styled.input`
  appearance: none;
  width: 13px;
  height: 13px;
  margin: 0;
  border: 1px solid #6b6b6b;
  border-radius: 3px;
  background: #f8f8f8;
`;

const TickLabel = styled.label`
  display: flex;
  align-items: center;
  gap: 3px;
  height: 26px;
`;

const Choice = styled.label`
  display: flex;
  align-items: center;
  gap: 2px;
  width: 60px;
  input { appearance: none; width: 13px; height: 13px; margin: 0; border: 1px solid #777; border-radius: 50%; background: #fff; }
  input:checked { border: 4px solid #0a5cb0; }
`;

const Trim = styled.input`
  appearance: none;
  width: 178px;
  height: 17px;
  margin: 0;
  border-top: 1px solid #fff;
  background: none;
  &::-webkit-slider-thumb { appearance: none; width: 17px; height: 3px; background: #8c8c8c; }
`;

const Rule = styled.hr`
  margin: 6px 26px 8px 4px;
  border: 0;
  border-top: 1px solid #9a9a9a;
`;

const LevelRow = styled.div`
  display: flex;
  align-items: center;
  gap: 12px;
  height: 36px;
  padding: 2px 0 0 5px;
  font: 14px ${UI};
`;

const SideRest = styled.div`
  && { flex: 1; }
  margin-top: -4px;
  background: linear-gradient(#e9e9e9, #dcdcdc);
`;

const TrimRow = ({ name, value, pos, below }: { name: string; value: string; pos: number; below?: number }) => (
  <Field $label={39} $below={below}>
    <label htmlFor={`trim-${name}`}>{name}</label>
    <Trim id={`trim-${name}`} type="range" min={0} max={100} defaultValue={pos} aria-label={name || "Gain"} />
    <output>{value}</output>
  </Field>
);

const SectionHead = ({ children, up, indent }: { children: React.ReactNode; up?: boolean; indent?: boolean }) => (
  <Head $indent={indent}><span>{children}</span><Caret up={up} /></Head>
);

function ReceivePanel() {
  return (
    <Side>
      <SideTitle>
        Receive
        <div>
          <svg width="10" height="6" viewBox="0 0 10 6"><path d="M0 0h10L5 6z" /></svg>
          <svg width="9" height="9" viewBox="0 0 9 9"><path d="M0 0l9 9M9 0L0 9" stroke="#111" strokeWidth="1.500" /></svg>
        </div>
      </SideTitle>
      <Display>
        <DisplayTop><span>RX 1</span><span>133 kHz</span></DisplayTop>
        <Digits value="0.089.400.000" dim={3} size={29} pitch={18} />
      </Display>
      <VolumeBox>
        <DeviceSelect aria-label="Output device"><option>Luidsprekers (Realtek USB2.0 Audio)</option></DeviceSelect>
        <VolumeRow>
          <Icon name="bars" size={16} />
          <Icon name="speaker" size={17} />
          <Fader
            $w={136}
            $lead="linear-gradient(90deg, #3fa040 23px, #bdbdbd 23px, #bdbdbd 58px, #f8f8f8 58px)"
            type="range"
            defaultValue={99}
            aria-label="Volume"
          />
          <output>99</output>
        </VolumeRow>
      </VolumeBox>
      <SectionHead>IF Display</SectionHead>
      <SectionHead>Mode</SectionHead>
      <Section>
        <SectionHead up>Filter</SectionHead>
        <FilterPad>{filters.map((f) => <FilterKey key={f} $on={f === "133kHz"}>{f}</FilterKey>)}</FilterPad>
      </Section>
      <Section>
        <SectionHead up indent>Radio</SectionHead>
        <Body $h={239}>
          <PushRow><Push $w={58} $kind="focus">Help</Push><Push $w={58}>Options</Push></PushRow>
          <Field $label={73} style={{ marginTop: 9 }}><label htmlFor="bias">Bias-T</label><Tick id="bias" type="checkbox" /></Field>
          <Field $label={73} $below={5}><label htmlFor="packing">Data packing</label><Tick id="packing" type="checkbox" /></Field>
          <Field $label={41}>
            <span>Gain:</span>
            <Choice><input type="radio" name="gain" defaultChecked />Linear</Choice>
            <Choice><input type="radio" name="gain" />Sensitive</Choice>
          </Field>
          <TrimRow name="" value="14" pos={63} below={13} />
          <TrimRow name="LNA:" value="14" pos={60} />
          <TrimRow name="Mixer:" value="14" pos={60} />
          <TrimRow name="VGA:" value="14" pos={63} />
          <Rule />
          <TrimRow name="Visual:" value="-15" pos={30} />
        </Body>
      </Section>
      <Section>
        <SectionHead up>AGC: Off</SectionHead>
        <Body $h={41}>
          <PushRow>
            {["Off", "Fast", "Med", "Slow"].map((t) => <Push key={t} $w={34} $kind="off" disabled>{t}</Push>)}
            <Icon name="reply" size={16} /><Icon name="map" size={16} /><Icon name="graph" size={16} />
          </PushRow>
        </Body>
      </Section>
      <SectionHead>CW: Off</SectionHead>
      <Section>
        <SectionHead up>Noise Blanker: Off</SectionHead>
        <Body $h={28}><TickLabel><Tick type="checkbox" />Enable</TickLabel></Body>
      </Section>
      <Section>
        <SectionHead up>NR3: Neural network</SectionHead>
        <Body $h={66}>
          <PushRow>
            {["Off", "NR1", "NR2", "NR3"].map((t) => <Push key={t} $w={34} $kind={t === "NR3" ? "on" : undefined}>{t}</Push>)}
          </PushRow>
          <LevelRow><label htmlFor="nrlevel">Level</label><Fader id="nrlevel" $w={180} type="range" defaultValue={0} /></LevelRow>
        </Body>
      </Section>
      <Section>
        <SectionHead>Notch: Off</SectionHead>
        <Body $h={27}><TickLabel><Tick type="checkbox" />Auto enable</TickLabel></Body>
      </Section>
      <SectionHead>Squelch: Off</SectionHead>
      <SideRest />
    </Side>
  );
}

/* ------------------------------------------------------------------ */
/* Signal meter                                                        */
/* ------------------------------------------------------------------ */

const MeterBox = styled.div<{ $left: number; $top: number; $w: number }>`
  position: absolute;
  left: ${(p) => p.$left}px;
  top: ${(p) => p.$top}px;
  width: ${(p) => p.$w}px;
  svg { display: block; width: 100%; }
`;

const scaleMarks: [string, number, number][] = [["-140", 29, 51], ["-120", 68, 38], ["-100", 111, 30], ["-80", 152, 26], ["-60", 194, 26], ["-40", 236, 30], ["-20", 278, 38], ["0", 318, 51]];

function SignalMeter({ small }: { small?: boolean }) {
  return (
    <MeterBox $left={small ? 57 : 58} $top={small ? 4 : 63} $w={small ? 174 : 346}>
      <svg viewBox="0 0 346 138" fontFamily={UI}>
        <rect x="0.500" y="0.500" width="345" height="135" fill="#020202" stroke="#242424" />
        <text x="11" y={small ? 20 : 19} fontSize={small ? 18 : 16} fill="#eee">dBm</text>
        <g fill="#b5b5b5" fontStyle="italic" fontSize="14" textAnchor="middle">
          {scaleMarks.map(([t, x, y]) => <text key={t} x={x} y={y}>{small ? t.replace("-", "") : t}</text>)}
        </g>
        <path d="M33 68Q173 20 312 68" fill="none" stroke="#fff" strokeWidth="3" />
        <path d="M34 68L28 54M73 55L68 41M111 48V34M152 45V29M194 45V29M236 48L237 34M273 55L277 41M312 68L317 54" stroke="#ddd" strokeWidth="2" />
        <path d="M52 62L49 52M92 51L90 41M173 44V34M214 46V36M255 51V42M295 62L296 52" stroke="#999" />
        <path d="M77 33L101 138" stroke="#999" />
        <g stroke="#c8cc24" fill="none"><path d="M132 22L142 138" /><circle cx="135" cy="60" r="5" strokeWidth="2.500" /></g>
        <g fill="#d3e53a"><rect x="91" y="91" width="74" height="28" rx="3" /><rect x="181" y="91" width="74" height="28" rx="3" /></g>
        <g fill="#111" fontWeight="700" fontSize={small ? 20 : 17} textAnchor="middle">
          <text x="128" y={small ? 112 : 111}>-85.9</text>
          <text x="218" y={small ? 112 : 111}>29.1</text>
        </g>
        <text transform="translate(252 114) rotate(-90)" fontSize="9" fill="#222">SNR</text>
      </svg>
    </MeterBox>
  );
}

/* ------------------------------------------------------------------ */
/* Spectrum plots                                                      */
/* ------------------------------------------------------------------ */

const Plot = styled.div<{ $h?: number }>`
  position: relative;
  ${(p) => (p.$h ? `flex: none; height: ${p.$h}px;` : "flex: 1; min-height: 0;")}
  background: #000;
  overflow: hidden;
  > svg { display: block; width: 100%; height: 100%; }
`;

const Heat = ({ id, stops }: { id: string; stops: [number, string][] }) => (
  <linearGradient id={id} gradientUnits="userSpaceOnUse" x1="0" x2="0" y1="0" y2="400">
    {stops.map(([y, c]) => <stop key={y} offset={y / 400} stopColor={c} />)}
  </linearGradient>
);

function ruler(from: number, to: number, step: number, x: (f: number) => number, y: number, major: number) {
  let d = "";
  const n = Math.round((to - from) / step);
  for (let i = 0; i <= n; i++) d += `M${x(from + i * step).toFixed(1)} ${y}v${i % major ? 3 : 7}`;
  return d;
}

const Readout = styled.div`
  position: absolute;
  left: 58px;
  top: 0;
  display: flex;
  gap: 20px;
  height: 60px;
  width: 374px;
  padding-top: 3px;
  background: #000;
  font: 13px ${MONO};
  color: #fff;
  ${Cells} { font-family: ${UI}; }
`;

const ReadoutInfo = styled.div`
  padding-top: 5px;
  white-space: nowrap;
  line-height: 20px;
  b { font-weight: 400; color: #e0da2c; margin-right: 16px; }
  small { font-size: 11px; color: #c6c024; }
`;

function WideSpectrum() {
  const fx = (f: number) => 110.5 + (f - 87) * 223.2;
  const ly = (v: number) => 1 + (-50 - v) * 5.92;
  const freqs = Array.from({ length: 19 }, (_, i) => 87 + i / 2);
  return (
    <Plot $h={443}>
      <svg viewBox="0 0 2232 443" preserveAspectRatio="none" fontFamily={UI}>
        <defs>
          <Heat id="wideHeat" stops={[[140, "#f4f4f4"], [160, "#f0b8b8"], [180, "#e05050"], [200, "#e00000"], [235, "#806000"], [270, "#00c400"], [300, "#069a14"], [340, "#0a5c30"], [383, "#082c44"]]} />
          <linearGradient id="plotBg" x2="0" y2="1"><stop stopColor="#000" /><stop offset=".5" stopColor="#0b0b0b" /><stop offset="1" stopColor="#1c1c1c" /></linearGradient>
          <linearGradient id="rulerBg" x2="0" y2="1"><stop stopColor="#555" /><stop offset="1" stopColor="#111" /></linearGradient>
          <linearGradient id="passband" x2="0" y2="1"><stop stopColor="#008200" stopOpacity=".8" /><stop offset=".5" stopColor="#2c6a2c" stopOpacity=".5" /><stop offset="1" stopColor="#a8a8a8" stopOpacity=".25" /></linearGradient>
          <linearGradient id="passEdge"><stop stopColor="#10c010" /><stop offset=".5" stopColor="#6cff6c" /><stop offset="1" stopColor="#10b010" /></linearGradient>
          <radialGradient id="discDark" cy=".3"><stop stopColor="#aaa" /><stop offset="1" stopColor="#777" /></radialGradient>
          <linearGradient id="discLight" x2="0" y2="1"><stop stopColor="#dedede" /><stop offset="1" stopColor="#b4b4b4" /></linearGradient>
        </defs>
        <rect width="2232" height="422" fill="url(#plotBg)" />
        {LEVELS.map((v) => <path key={v} d={`M56 ${ly(v)}H2180`} stroke="#4a4a4a" strokeDasharray="1 2" />)}
        <path d={toArea(wideTrace, 383)} fill="url(#wideHeat)" />
        <rect x="223" y="383" width="2009" height="39" fill="#110c68" />
        <path d="M223 386.500H2180" stroke="#3a3a90" strokeDasharray="1 2" />
        <path d={toLine(wideTrace)} fill="none" stroke="#c4c4cc" strokeWidth="1" />
        <rect x="632" y="3" width="30" height="378" fill="url(#passband)" stroke="#1ea01e" />
        <rect x="632" y="2" width="30" height="6" fill="url(#passEdge)" />
        <rect x="632" y="375" width="30" height="6" fill="#6cc06c" />
        <rect x="640" y="9" width="15" height="20" fill="#044a04" />
        <path d="M632 38h30" stroke="#30c030" />
        <path d="M647.500 38v337" stroke="#70b070" strokeDasharray="3 3" />
        <text x="647" y="24" fill="#fff" fontSize="11" textAnchor="middle">1</text>
        <rect y="422" width="2232" height="10" fill="url(#rulerBg)" />
        <path d="M0 422.500H2232" stroke="#777" />
        <path d={ruler(86.550, 96.450, 0.05, fx, 422, 10)} stroke="#999" />
        <g fill="#e8e8e8" fontSize="10">
          {LEVELS.map((v) => <text key={v} x="5" y={ly(v) + 5}>{v} dBm</text>)}
          <g textAnchor="end">{LEVELS.map((v) => <text key={v} x="2228" y={ly(v) + 5}>{v} dBm</text>)}</g>
          <g textAnchor="middle" fill="#fff">{freqs.map((f) => <text key={f} x={fx(f)} y="440">{f.toFixed(3)}</text>)}</g>
        </g>
        <text x="1227" y="409" fill="#fff" fontSize="13" textAnchor="middle">BROADCAST FM</text>
      </svg>
      <Readout>
        <Digits value="89.400.000" size={43} pitch={26} />
        <ReadoutInfo><b>RX 1</b>BC-FM<br /><small>133 kHz</small></ReadoutInfo>
      </Readout>
      <SignalMeter />
    </Plot>
  );
}

function ZoomSpectrum() {
  const fx = (f: number) => 88 + (f - 88.9) * 1359;
  const ly = (v: number) => 6 + (-50 - v) * 4.17;
  const freqs = Array.from({ length: 11 }, (_, i) => 88.9 + i / 10);
  return (
    <Plot $h={327}>
      <svg viewBox="0 0 1536 327" preserveAspectRatio="none" fontFamily={UI}>
        <defs>
          <Heat id="zoomHeat" stops={[[92, "#f6f6f6"], [108, "#ecb0b0"], [128, "#e03c3c"], [147, "#de0000"], [170, "#7a6400"], [195, "#00c000"], [220, "#068c1c"], [248, "#0a5034"], [267, "#082c50"]]} />
        </defs>
        <rect width="1536" height="306" fill="url(#plotBg)" />
        {LEVELS.map((v) => <path key={v} d={`M52 ${ly(v)}H1484`} stroke="#505050" strokeDasharray="1 3" />)}
        <path d={toArea(zoomTrace, 267)} fill="url(#zoomHeat)" />
        <rect y="267" width="1536" height="40" fill="#110c68" />
        <path d="M52 277H1484" stroke="#3a3a90" strokeDasharray="1 3" />
        <path d={toLine(zoomTrace)} fill="none" stroke="#c8ccd0" strokeWidth="1" />
        <rect x="678" y="2" width="180" height="263" fill="url(#passband)" stroke="#1ea01e" />
        <rect x="678" y="1" width="180" height="6" fill="url(#passEdge)" />
        <rect x="678" y="259" width="180" height="6" fill="#4ca04c" />
        <path d="M768.500 7V259" stroke="#1c801c" strokeDasharray="3 3" />
        <rect y="306" width="1536" height="10" fill="url(#rulerBg)" />
        <path d={ruler(88.84, 89.96, 0.02, fx, 306, 5)} stroke="#999" />
        <g fill="#e8e8e8" fontSize="10">
          {LEVELS.map((v) => <text key={v} x="5" y={ly(v) + 5} opacity={v < -108 ? 0.6 : 1}>{v} dBm</text>)}
          <g textAnchor="end">{LEVELS.map((v) => <text key={v} x="1531" y={ly(v) + 5} opacity={v < -108 ? 0.6 : 1}>{v} dBm</text>)}</g>
          <g textAnchor="middle" fill="#fff">{freqs.map((f) => <text key={f} x={fx(f)} y="323">{f.toFixed(3)}</text>)}</g>
        </g>
        <text x="768" y="293" fill="#fff" fontSize="13" textAnchor="middle">BROADCAST FM</text>
      </svg>
      <SignalMeter small />
    </Plot>
  );
}

/* ------------------------------------------------------------------ */
/* Waterfalls                                                          */
/* ------------------------------------------------------------------ */

const Waterfall = styled(Plot)`
  flex: 639 1 0;
`;

const Clock = styled.div`
  position: absolute;
  left: 10px;
  bottom: 12px;
  width: 178px;
  height: 61px;
  border-radius: 4px;
  background: radial-gradient(ellipse at 50% 100%, #fff27c 0%, #fbe070 35%, #f8ce72 75%);
  color: #4f3a10;
  font-family: "Liberation Mono", ${MONO};
  text-align: center;
  small { display: block; font-size: 9px; line-height: 16px; color: #7c6428; }
  div { font-size: 36px; line-height: 36px; }
  span { font-size: 20px; }
`;

const TimeTag = ({ x = 0, y, w, text, dim }: { x?: number; y: number; w: number; text: string; dim?: boolean }) => (
  <g>
    <rect x={x} y={y} width={w} height="10" fill="url(#tagBg)" opacity={dim ? 0.4 : 1} />
    {dim && <rect x={x} y={y} width="10" height="10" fill="#4a4a4a" />}
    <text x={x + 11} y={y + 15} fontSize="11" fill={dim ? "#484848" : "#f0f0f0"} fontFamily={MONO}>{text}</text>
  </g>
);

/* Band edges ripple slowly with a random part on top. */
const ripple = (base: number, amp: number, noise: number, period: number) => (y: number, r: number) =>
  base + amp * Math.max(0, Math.sin(y / period) * Math.sin(y / (period * 2.7))) + noise * r;

function WideWaterfall() {
  return (
    <Waterfall>
      <svg viewBox="0 0 639 728" preserveAspectRatio="none">
        <defs>
          <linearGradient id="tagBg" x2="0" y2="1"><stop stopColor="#666" /><stop offset="1" stopColor="#1c1c1c" /></linearGradient>
          <linearGradient id="bandA"><stop stopColor="#064a60" /><stop offset=".3" stopColor="#0b8848" /><stop offset=".75" stopColor="#0a8448" /><stop offset="1" stopColor="#065a60" /></linearGradient>
          <linearGradient id="bandB"><stop stopColor="#053a70" /><stop offset=".4" stopColor="#087448" /><stop offset=".65" stopColor="#087448" /><stop offset="1" stopColor="#053a70" /></linearGradient>
          <linearGradient id="bandC"><stop stopColor="#00804a" /><stop offset=".15" stopColor="#00f000" /><stop offset=".5" stopColor="#0aff00" /><stop offset=".85" stopColor="#00f000" /><stop offset="1" stopColor="#00804a" /></linearGradient>
        </defs>
        <rect width="639" height="728" fill="#000103" />
        <g fill="none" strokeWidth="2">
          <path d={rows(335, ripple(13, 3, 3, 5), 0, 728, 3)} stroke="#075a5c" />
          <rect x="322" y="0" width="27" height="728" fill="url(#bandA)" stroke="none" />
          <path d={rows(335, ripple(2, 4, 9, 7), 0, 728, 8, 2, 0.6)} stroke="#14a04a" opacity=".7" />
          <path d={rows(402, ripple(12, 2, 4, 6), 0, 728, 5)} stroke="#043462" />
          <rect x="390" y="0" width="25" height="728" fill="url(#bandB)" stroke="none" />
          <path d={rows(404, ripple(1, 3, 7, 8), 0, 728, 15, 2, 0.5)} stroke="#0c8048" opacity=".7" />
          <path d={rows(491, (y, r) => 2 + 11 * Math.pow(Math.abs(Math.sin(y / 7 + Math.sin(y / 19))), 8) + 2 * r, 0, 728, 21)} stroke="#05508a" />
          <path d={rows(491, ripple(0, 2, 3, 4), 0, 728, 33, 2, 0.6)} stroke="#109060" />
          <path d={rows(491, () => 0.7, 0, 728, 34, 3, 0.4)} stroke="#a0b020" />
          <path d={rows(513, ripple(0, 1, 3, 9), 0, 728, 13, 2, 0.7)} stroke="#064a8c" />
          <path d={rows(513, () => 0.6, 0, 728, 17, 2, 0.35)} stroke="#4ac090" />
          <path d={rows(312, ripple(0, 1, 2, 9), 24, 130, 19, 2, 0.6)} stroke="#064080" />
          <path d={rows(558, ripple(19, 1, 3, 6), 0, 728, 25)} stroke="#04407c" />
          <rect x="541" y="0" width="34" height="728" fill="url(#bandC)" stroke="none" />
          <path d={rows(603, () => 1, 0, 145, 29, 3, 0.2)} stroke="#0a3c80" />
          <path d={rows(268, () => 0.5, 0, 145, 31, 2, 0.1)} stroke="#1c5050" />
          <path d={rows(290, () => 0.5, 0, 145, 35, 2, 0.2)} stroke="#1c5050" />
        </g>
        <rect y="145" width="639" height="499" fill="#000" opacity=".77" />
        <path d="M82 14.500H639" stroke="#b0b8b0" strokeDasharray="2 2" />
        <path d="M0 214.500H639M0 414.500H639M0 613.500H639" stroke="#2c342c" strokeDasharray="2 2" />
        <path d="M632.500 0V145M632.500 644V728" stroke="#2f9a2f" strokeDasharray="3 3" />
        <TimeTag y={14} w={82} text="16:52:00z" />
        <TimeTag y={214} w={82} text="16:51:55z" dim />
        <TimeTag y={613} w={82} text="16:51:45z" dim />
        <g fill="#fff" fontFamily={MONO}>
          <g fontSize="31"><text x="204" y="180">Varied</text><text x="373" y="180">89.4</text><text x="503" y="180">DX</text><text x="596" y="180">–</text></g>
          <g fontSize="89"><text x="268" y="371">E201<tspan fontSize="120">✓</tspan></text><text x="195" y="479">P1_SR___</text></g>
        </g>
      </svg>
      <Clock><small>UTC</small><div>16:52<span>:00</span></div></Clock>
    </Waterfall>
  );
}

const Pin = styled.div`
  position: absolute;
  left: 50%;
  bottom: 1px;
  transform: translateX(-50%);
  width: 107px;
  height: 32px;
  border: 1px solid #b98f48;
  border-radius: 4px;
  background: radial-gradient(ellipse at 50% 100%, #fff27c 0%, #fbd974 60%, #f6c478 100%);
  color: #4f3a10;
  font: 12px/30px ${MONO};
  text-align: center;
  white-space: nowrap;
`;

const swell = (base: number, grow: number, noise: number) => (y: number, r: number) => {
  const bumps = [102, 131, 165, 190, 205, 298].reduce((s, c) => s + Math.exp(-Math.pow((y - c) / (c === 298 ? 7 : 3), 2)), 0);
  return base + (grow * y) / 327 + bumps * grow * 0.6 + noise * r;
};

const cloud = (y: number) =>
  28 * Math.exp(-Math.pow((y - 128) / 32, 2)) + 24 * Math.exp(-Math.pow((y - 16) / 18, 2)) + 24 * Math.exp(-Math.pow((y - 245) / 26, 2));

function ZoomWaterfall() {
  return (
    <Plot>
      <svg viewBox="0 0 1536 327" preserveAspectRatio="none">
        <defs>
          <linearGradient id="bigBand">
            <stop stopColor="#001428" stopOpacity="0" /><stop offset=".12" stopColor="#043a78" /><stop offset=".2" stopColor="#088858" />
            <stop offset=".28" stopColor="#04d81c" /><stop offset=".45" stopColor="#04fa10" /><stop offset=".62" stopColor="#04f014" />
            <stop offset=".76" stopColor="#06b82c" /><stop offset=".85" stopColor="#085a68" /><stop offset=".92" stopColor="#04305c" /><stop offset="1" stopColor="#001428" stopOpacity="0" />
          </linearGradient>
          <linearGradient id="flash"><stop stopColor="#0a6030" stopOpacity="0" /><stop offset=".6" stopColor="#30c050" /><stop offset="1" stopColor="#063040" stopOpacity="0" /></linearGradient>
          <linearGradient id="hotCore" x2="0" y2="1"><stop stopColor="#c0a000" /><stop offset=".6" stopColor="#70c000" /><stop offset="1" stopColor="#00ff10" /></linearGradient>
        </defs>
        <rect width="1536" height="327" fill="#000104" />
        <rect x="89" width="264" height="327" fill="url(#bigBand)" />
        <g fill="none" strokeWidth="2">
          <path d={rows(125, ripple(2, 8, 14, 7), 0, 327, 3, 2, 0.6)} stroke="#06507c" opacity=".45" />
          <path d={rows(315, ripple(2, 8, 16, 8), 0, 327, 4, 2, 0.6)} stroke="#0a8050" opacity=".45" />
          <path d={rows(222, ripple(60, 14, 24, 6), 0, 327, 9, 2, 0.3)} stroke="#14ff20" opacity=".35" />
          <path d={rows(496, (y, r) => (4 * Math.abs(Math.sin(y / 12)) + 6 * r) * (Math.sin(y / 8) > 0 ? 1 : 0.2), 0, 327, 12, 2, 0.45)} stroke="#052c58" opacity=".8" />
          <path d={rows(768, (y, r) => cloud(y) * (0.3 + r * r), 0, 300, 16, 1, 0.6)} stroke="#043260" opacity=".5" strokeWidth="1" />
          <path d={rows(768, (y, r) => cloud(y) * 0.5 * r, 0, 300, 18, 1, 0.7)} stroke="#06406c" opacity=".5" strokeWidth="1" />
          <path d={rows(768, (y, r) => 10 * Math.exp(-Math.pow((y - 128) / 12, 2)) * r, 100, 156, 20)} stroke="#089058" opacity=".6" />
          <path d={rows(877, swell(2, 5, 2), 0, 327, 22)} stroke="#04487c" />
          <path d={rows(877, swell(1, 2, 2), 0, 290, 23)} stroke="#088c58" />
          <path d={rows(930, swell(2, 6, 2), 0, 327, 24)} stroke="#065a7c" />
          <path d={rows(930, swell(1, 4, 2), 0, 327, 26)} stroke="#0a9c50" />
          <path d={rows(903, swell(3, 8, 2), 0, 327, 27)} stroke="#06904c" />
          <path d={rows(903, swell(2, 6, 2), 0, 327, 28)} stroke="#00f810" />
          <rect x="902" width="2" height="327" fill="url(#hotCore)" />
          <path d={rows(1447, swell(2, 8, 2), 0, 327, 37)} stroke="#04487c" />
          <path d={rows(1447, swell(2, 4, 1), 0, 327, 38)} stroke="#06a84c" />
          <path d={rows(1447, () => 0.8, 0, 327, 39, 2, 0.4)} stroke="#30e040" />
          <path d={rows(1421, () => 0.8, 0, 327, 41, 3, 0.4)} stroke="#042850" />
          <path d={rows(1473, () => 1, 0, 327, 42, 3, 0.5)} stroke="#042850" />
        </g>
        <path d="M1175.500 0V327" stroke="#2c9c50" strokeDasharray="8 14 4 20" opacity=".8" />
        <path d="M1020 207.500h4M1034 207.500h10M1060 207.500h8" stroke="#4aa04a" />
        <path d="M83 14.500H1454M419 214.500H1454" stroke="#9aa29a" strokeDasharray="2 2" />
        <rect y="63" width="419" height="255" fill="#000" opacity=".77" />
        <rect x="290" y="207" width="215" height="1" fill="url(#flash)" />
        <path d="M678.500 0V327M768.500 0V295M858.500 0V327" stroke="#1f8a1f" strokeDasharray="3 3" />
        <TimeTag y={14} w={83} text="16:52:00z" />
        <TimeTag y={214} w={83} text="16:51:55z" dim />
        <TimeTag x={1454} y={14} w={82} text="16:52:00z" />
        <TimeTag x={1454} y={214} w={82} text="16:51:55z" />
        <g fill="#fff" fontFamily={MONO}>
          <g fontSize="16"><text x="110" y="87">Varied</text><text x="195" y="87">89.4</text><text x="260" y="87">DX</text><text x="309" y="87">-</text></g>
          <g fontSize="44"><text x="142" y="178">E201<tspan fontSize="58">✓</tspan></text><text x="108" y="232">P1_SR___</text></g>
        </g>
      </svg>
      <Pin>1 : 89.4 MHz</Pin>
    </Plot>
  );
}

/* ------------------------------------------------------------------ */
/* Receivers dock                                                      */
/* ------------------------------------------------------------------ */

const Center = styled.div`
  display: flex;
  flex-direction: column;
  min-width: 0;
  min-height: 0;
`;

const Lower = styled.div`
  flex: 1;
  display: flex;
  gap: 5px;
  min-height: 0;
  margin-top: 6px;
`;

const Dock = styled.section`
  flex: 1588 1 0;
  display: flex;
  flex-direction: column;
  min-width: 0;
  padding-bottom: 2px;
  border-left: 1px solid #b5bcc5;
  border-bottom: 1px solid #777;
  background: #f4f6ff;
`;

const DockTitle = styled.div`
  display: flex;
  align-items: center;
  justify-content: space-between;
  height: 24px;
  padding: 1px 6px 0 2px;
  background: #bfccda;
  font-weight: 700;
  font-size: 14px;
  line-height: 20px;
`;

const DockBody = styled.div`
  flex: 1;
  display: grid;
  grid-template-columns: 34px minmax(0, 1fr);
  padding: 5px 7px 5px 0;
  min-height: 0;
  background: #fcfcfc;
`;

const SideTools = styled.div`
  display: flex;
  flex-direction: column;
  align-items: center;
  gap: 5px;
  padding-top: 3px;
  background: #f0f0f0;
`;

const SideTool = styled.button`
  display: grid;
  place-items: center;
  width: 21px;
  height: 21px;
  border: 1px solid #d4d4d4;
  border-radius: 3px;
  background: #fff;
`;

const Frame = styled.div`
  display: grid;
  min-height: 0;
  padding: 2px;
  background: #000;
`;

const FrameLine = styled.div`
  display: flex;
  flex-direction: column;
  min-height: 0;
  padding: 2px;
  border: 1px solid #e2e21c;
`;

const DockTabs = styled.div`
  display: flex;
  height: 27px;
  border-top: 1px solid #a9a9a9;
`;

const DockTab = styled.button<{ $active?: boolean }>`
  padding: 0 10px;
  border-right: 1px solid #e0e0e6;
  background: ${(p) => (p.$active ? "#fcfcfc" : "#f3f3f5")};
  color: ${(p) => (p.$active ? "#111" : "#7a7a7a")};
  font-size: 14px;
  line-height: 20px;
  &:first-child { padding: 0 6px; }
`;

const dockTabs = ["Receivers", "BFM Spectrum", "Frequency Database", "RDS Logfile", "Continuum Mode", "Audio Waterfall", "3D Waterfall", "Signal History", "Playback"];

function ReceiversDock() {
  return (
    <Dock>
      <DockTitle>
        Receivers
        <svg width="8" height="8" viewBox="0 0 8 8"><path d="M0 0l8 8M8 0L0 8" stroke="#111" strokeWidth="1.500" /></svg>
      </DockTitle>
      <DockBody>
        <SideTools>
          {["menu", "plus", "speaker", "zoomIn", "zoomOut", "levels", "dots"].map((n) => (
            <SideTool key={n} aria-label={n}><Icon name={n} size={n === "plus" ? 10 : 14} /></SideTool>
          ))}
        </SideTools>
        <Frame><FrameLine><ZoomSpectrum /><ZoomWaterfall /></FrameLine></Frame>
      </DockBody>
      <DockTabs>{dockTabs.map((t, i) => <DockTab key={t} $active={i === 0}>{t}</DockTab>)}</DockTabs>
    </Dock>
  );
}

/* ------------------------------------------------------------------ */
/* Band navigator                                                      */
/* ------------------------------------------------------------------ */

const Navigator = styled.div`
  display: flex;
  height: 26px;
  flex: none;
  gap: 4px;
  background: #f0f0f0;
  > svg { flex: 1; min-width: 0; height: 26px; background: #000; margin: 0 -2px 0 -4px; }
`;

const NavButton = styled.button<{ $w: number }>`
  display: flex;
  align-items: center;
  justify-content: center;
  gap: 16px;
  width: ${(p) => p.$w}px;
  border: 1px solid #c8c8c8;
  border-radius: 3px;
  background: #fff;
  font-size: 12px;
`;

function BandNavigator() {
  const nx = (f: number) => 147.5 + (f - 70) * 41.760;
  const freqs = [70, 75, 80, 85, 90, 95, 100, 105, 110, 115];
  return (
    <Navigator>
      <NavButton $w={26} aria-label="Back"><Icon name="rewind" size={17} /></NavButton>
      <svg viewBox="0 0 2089 26" preserveAspectRatio="none" fontFamily={UI}>
        <defs>
          <radialGradient id="navGlow" cy="1" r=".6"><stop stopColor="#8a8a10" /><stop offset="1" stopColor="#8a8a10" stopOpacity="0" /></radialGradient>
        </defs>
        <rect width="2089" height="13" fill="#1c1c1c" />
        <path d={ruler(67, 116, 0.5, nx, 0, 6)} stroke="#777" />
        <rect x="836" y="0" width="418" height="26" fill="#2c2c2c" />
        <rect x="836" y="0" width="418" height="26" fill="url(#navGlow)" />
        <path d="M836.500 0V26M1253.500 0V26" stroke="#aaa" />
        <path d="M1044.500 0V26" stroke="#e8e020" />
        <g fill="#a8a8a8" fontSize="13" textAnchor="middle">{freqs.map((f) => <text key={f} x={nx(f)} y="21">{f.toFixed(3)}</text>)}</g>
      </svg>
      <NavButton $w={38} aria-label="Keyboard"><Icon name="keyboard" size={17} /></NavButton>
      <NavButton $w={48}>x5<svg width="5" height="8" viewBox="0 0 5 8"><path d="M0 0l5 4-5 4z" /></svg></NavButton>
      <NavButton $w={25} aria-label="Forward"><Icon name="fastForward" size={17} /></NavButton>
    </Navigator>
  );
}

/* ------------------------------------------------------------------ */
/* Level scale                                                         */
/* ------------------------------------------------------------------ */

const Scale = styled.aside`
  display: flex;
  flex-direction: column;
  min-height: 0;
  margin: 0 2px 0 0;
  border-left: 1px solid #888;
  background: #000;
`;

const AutoButton = styled.button`
  height: 29px;
  border-bottom: 1px solid #444;
  background: #262626;
  color: #e2e2e2;
  font-size: 15px;
`;

const ScaleLevels = styled.div`
  flex: 1;
  display: flex;
  flex-direction: column;
  justify-content: space-between;
  align-items: center;
  padding: 28px 0 28px;
  background: linear-gradient(
    #000 24.2%, #fff 24.2%, #fff 30.5%, #ff6060 34%, #f00000 37.6%, #8a5000 40.5%, #40a000 43.5%, #00ff00 46%,
    #00c830 49.5%, #008050 54.5%, #003c70 58.5%, #001428 62%, #000 61.6%, #ddd 61.7%, #ddd 61.8%, #000 61.8%
  );
`;

const ScaleMark = styled.span<{ $boxed: boolean }>`
  width: 28px;
  height: 18px;
  border-radius: 3px;
  background: ${(p) => (p.$boxed ? "rgba(0, 0, 0, 0.5)" : "none")};
  color: ${(p) => (p.$boxed ? "#b4b4b4" : "#8a8a8a")};
  font-size: 9px;
  line-height: 18px;
  text-align: center;
`;

/* ------------------------------------------------------------------ */
/* RDS Spy window                                                      */
/* ------------------------------------------------------------------ */

const RdsWindow = styled.section`
  position: absolute;
  left: 163px;
  top: 1015px;
  width: 290px;
  border: 1px solid #a8a8a8;
  border-radius: 6px;
  background: #f0f0f0;
  box-shadow: 0 2px 6px rgba(0, 0, 0, 0.3);
  overflow: hidden;
  font: 12px ${SMALL};
`;

const RdsTitle = styled.div`
  display: flex;
  align-items: center;
  gap: 6px;
  height: 26px;
  padding: 0 18px 1px 3px;
  background: #f5f5f5;
  color: #8b8b8b;
  font: 15px ${UI};
  > span { flex: 1; }
  > div { display: flex; gap: 38px; }
`;

const RdsMenu = styled.nav`
  display: flex;
  gap: 14px;
  height: 25px;
  padding: 0 6px;
  background: #fff;
  color: #6f6f6f;
  button { font: 15px ${UI}; }
`;

const RdsDisplay = styled.div`
  display: flex;
  height: 64px;
  padding: 6px 0 0 11px;
  background: #0e1b3f;
  color: #2fae3a;
  line-height: 16px;
  b { color: #fff; margin: 0 9px 0 3px; }
  i { font-style: normal; color: #fff; margin-left: 6px; }
`;

const RdsDashes = styled.div`
  display: flex;
  gap: 5px;
  width: 143px;
  padding-top: 15px;
  span { width: 11px; height: 3px; background: #fff; }
`;

const RdsBody = styled.div`
  display: grid;
  grid-template-columns: 114px 174px;
  grid-template-rows: 35px 26px;
  row-gap: 3px;
  padding: 3px 0 2px;
  border-bottom: 1px solid #999;
`;

const RdsCells = styled.div<{ $cols: string }>`
  display: grid;
  grid-template-columns: ${(p) => p.$cols};
  border: 1px solid #fff;
  outline: 1px solid #aaa;
  outline-offset: -1px;
`;

const RdsButton = styled.button<{ $plain?: boolean }>`
  border: 1px solid;
  border-color: #fff #909090 #909090 #fff;
  background: linear-gradient(#f7f7f7, #dedcd8);
  font: ${(p) => (p.$plain ? 400 : 700)} 12px ${SMALL};
`;

const RdsCombo = styled.div`
  display: grid;
  place-items: center;
  background: #d8d8d8;
  border-right: 1px solid #999;
  select { appearance: none; width: 52px; height: 20px; padding: 0 3px; border: 2px inset #bbb; border-radius: 0; background: #fff url("data:image/svg+xml,%3Csvg xmlns='http://www.w3.org/2000/svg' width='16' height='16'%3E%3Cpath fill='%23ddd' d='M0 0h16v16H0z'/%3E%3Cpath d='M4 6h8l-4 4z'/%3E%3C/svg%3E") no-repeat right; font: 12px ${SMALL}; }
`;

const RdsSlider = styled.div`
  padding: 0 7px;
  border-top: 1px solid #aaa;
  svg { display: block; }
`;

const RdsTrack = styled.input`
  display: block;
  appearance: none;
  width: 98px;
  height: 18px;
  margin: 0;
  background: none;
  &::-webkit-slider-runnable-track { height: 11px; border: 1px solid #888; background: #fff; }
  &::-webkit-slider-thumb { appearance: none; width: 8px; height: 18px; margin-top: -4px; border: 1px solid #888; background: #eaeaea; }
`;

const RdsFooter = styled.div`
  height: 16px;
`;

const Ticks = () => (
  <svg width="98" height="5" viewBox="0 0 98 5"><path d="M4.500 0v4M22.500 0v4M40.500 0v4M58.500 0v4M76.500 0v4M94.500 0v4" stroke="#222" /></svg>
);

function RdsSpy() {
  return (
    <RdsWindow>
      <RdsTitle>
        <Icon name="rds" size={16} />
        <span>RDS Spy - defa...</span>
        <div>
          <svg width="10" height="10" viewBox="0 0 10 10"><path d="M0 5.500h10" stroke="#999" /></svg>
          <svg width="10" height="10" viewBox="0 0 10 10"><path d="M.5.5h9v9h-9z" fill="none" stroke="#ddd" /></svg>
          <svg width="10" height="10" viewBox="0 0 10 10"><path d="M0 0l10 10M10 0L0 10" stroke="#888" /></svg>
        </div>
      </RdsTitle>
      <RdsMenu>{["File", "View", "Configure", "Help"].map((t) => <button key={t}>{t}</button>)}</RdsMenu>
      <RdsDisplay>
        <RdsDashes>{Array.from({ length: 8 }, (_, i) => <span key={i} />)}</RdsDashes>
        <div>PI <b>E201</b>BER <b>88 %</b><br />Grp cnt<i>32</i></div>
      </RdsDisplay>
      <RdsBody>
        <RdsSlider>
          <Ticks />
          <RdsTrack type="range" defaultValue={40} aria-label="Position" />
          <Ticks />
        </RdsSlider>
        <RdsCells $cols="1fr 1fr 1fr">
          <RdsButton>Reset</RdsButton>
          <RdsCombo><select aria-label="Frequency"><option>89,3</option></select></RdsCombo>
          <RdsButton $plain>Tune</RdsButton>
        </RdsCells>
        <RdsCells $cols="1fr 1fr"><RdsButton>PLAY...</RdsButton><RdsButton>STOP</RdsButton></RdsCells>
        <RdsCells $cols="1fr 1fr 1fr"><RdsButton>...</RdsButton><RdsButton>REC</RdsButton><RdsButton>STOP</RdsButton></RdsCells>
      </RdsBody>
      <RdsFooter />
    </RdsWindow>
  );
}

/* ------------------------------------------------------------------ */
/* Status bar                                                          */
/* ------------------------------------------------------------------ */

const StatusBar = styled.footer`
  display: flex;
  align-items: center;
  gap: 15px;
  padding: 0 4px 1px 9px;
  background: #f1f1f1;
  border-top: 1px solid #d8d8d8;
  color: #1c1c1c;
  font-size: 14px;
  line-height: 20px;
`;

const DeviceNote = styled.span`
  flex: 1;
  color: #777;
`;

const SchedulerNote = styled.span`
  margin-right: 16px;
`;

const StatusItem = styled.span`
  display: flex;
  align-items: center;
  gap: 13px;
`;

const Gauge = styled.span<{ $value: number }>`
  width: 70px;
  height: 12px;
  border: 1px solid #b8b8b8;
  background: linear-gradient(90deg, #0ea83a ${(p) => p.$value}%, #e4e4e4 ${(p) => p.$value}%);
`;

/* ------------------------------------------------------------------ */

export default function App() {
  const levels = Array.from({ length: 31 }, (_, i) => -5 * (i + 1));
  return (
    <>
      <Global />
      <Shell>
        <TitleBar>
          <QuickAccess>
            {["paleFolder", "palePlay", "camera", "undo", "calendar", "clapper", "greenDot", "mixer", "stopCircle"].map((n) => (
              <QuickButton key={n} $on={n === "greenDot"} aria-label={n}><Icon name={n} size={15} /></QuickButton>
            ))}
            <svg width="6" height="7" viewBox="0 0 6 7"><path d="M0 .5h6M0 3h6L3 7z" stroke="#111" /></svg>
          </QuickAccess>
          <WindowTitle>Airspy :: Main :: SDR Console v3.4</WindowTitle>
          <WindowButtons>
            <WindowButton aria-label="Minimize"><svg width="10" height="10" viewBox="0 0 10 10"><path d="M0 5.500h10" stroke="#111" /></svg></WindowButton>
            <WindowButton aria-label="Restore"><svg width="10" height="10" viewBox="0 0 10 10"><path d="M.5 2.500h7v7h-7zM2.500.5h5q2 0 2 2v5" fill="none" stroke="#111" /></svg></WindowButton>
            <WindowButton aria-label="Close"><svg width="10" height="10" viewBox="0 0 10 10"><path d="M0 0l10 10M10 0L0 10" stroke="#111" /></svg></WindowButton>
          </WindowButtons>
        </TitleBar>
        <TabBar>
          {["Home", "View", "Layout", "Receive", "Rec/Playback", "Favourites", "Memories", "Tools", "Help"].map((t) => (
            <MenuTab key={t} $active={t === "Rec/Playback"}>{t}</MenuTab>
          ))}
          <StyleMenu><Icon name="styleMark" size={13} /><span>Style</span><Caret /><Icon name="gear" size={17} /></StyleMenu>
        </TabBar>
        <Ribbon />
        <Workspace>
          <ReceivePanel />
          <Center>
            <WideSpectrum />
            <Lower><WideWaterfall /><ReceiversDock /></Lower>
            <BandNavigator />
          </Center>
          <Scale>
            <AutoButton>Auto</AutoButton>
            <ScaleLevels>{levels.map((v) => <ScaleMark key={v} $boxed={v <= -40 && v >= -95}>{v}</ScaleMark>)}</ScaleLevels>
          </Scale>
        </Workspace>
        <StatusBar>
          <DeviceNote>Airspy, BW = 10.000 MHz</DeviceNote>
          <SchedulerNote>Scheduler: On</SchedulerNote>
          <StatusItem>CPU: 5.3%<Gauge $value={4} /></StatusItem>
          <StatusItem>GPU: 36.2%<Gauge $value={28} /></StatusItem>
          <StatusItem>Audio: 29ms<Gauge $value={22} /></StatusItem>
        </StatusBar>
        <Orb aria-label="Application menu">
          <svg width="24" height="26" viewBox="0 0 24 26">
            <path d="M4 4v18h4M4 13h4" fill="none" stroke="#555" />
            <path d="M9 3.500h9M14 13.500h9M14 22.500h9" stroke="#555" strokeDasharray="2 1" />
            <g fill="#8fb8e8" stroke="#3b67a8"><path d="M1.500 1.500h5v5h-5zM7.500 10.500h5v5h-5zM7.500 19.500h5v5h-5z" /></g>
          </svg>
        </Orb>
        <RdsSpy />
      </Shell>
    </>
  );
}
